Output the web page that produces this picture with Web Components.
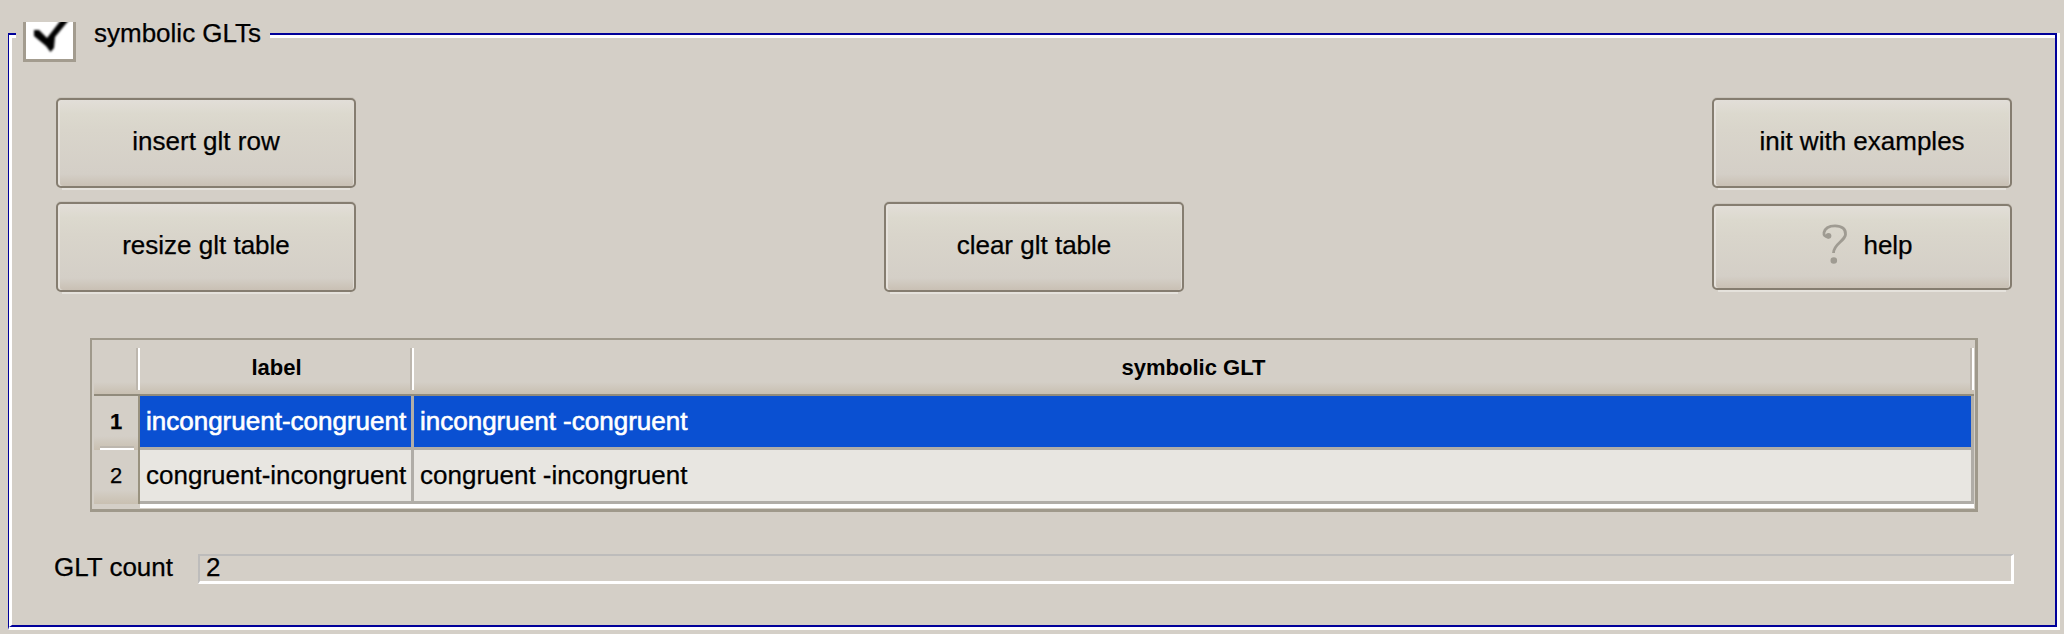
<!DOCTYPE html>
<html lang="en"><head><meta charset="utf-8"><title>symbolic GLTs</title>
<style>
html,body{margin:0;height:100%;background:#d4cfc7}
body{font:26px/30px "Liberation Sans",Arial,sans-serif;color:#000;overflow:hidden;-webkit-text-stroke:.25px}
</style></head><body>
<glt-group>
<span slot="title">symbolic GLTs</span>
<div style="display:grid;grid-template-columns:1fr 1fr 1fr;padding:0 43px 0 44px;row-gap:14px;align-items:center">
<glt-button>insert glt row</glt-button><span></span><glt-button style="justify-self:end">init with examples</glt-button>
<glt-button>resize glt table</glt-button><glt-button style="justify-self:center">clear glt table</glt-button><glt-button short style="justify-self:end"><glt-question slot="icon"></glt-question>help</glt-button>
</div>
<glt-table></glt-table>
<glt-count value="2">GLT count</glt-count>
</glt-group>
<script>
const define=(name,html)=>customElements.define(name,class extends HTMLElement{
constructor(){super();const t=document.createElement('template');t.innerHTML=html;
this.attachShadow({mode:'open'}).append(t.content.cloneNode(true));
const v=this.shadowRoot.querySelector('[data-value]');if(v)v.textContent=this.getAttribute('value');}});

define('glt-group',`<style>
:host{display:block;box-sizing:border-box;height:634px;padding:22px 4px 4px 8px}
.frame{display:grid;grid-template-rows:76px 1fr;height:608px}
.head{display:grid;grid-template-columns:4px 4px 7px 53px 18px 176px 1fr;height:76px}
.edge{margin-top:11px}
.l{box-sizing:border-box;border-left:1px solid #00009a;border-top:2px solid #00009a;box-shadow:inset 3px 3px #fff}
.s{border-top:2px solid #00009a;box-shadow:inset 0 3px #fff}
.r{border-top:2px solid #00009a;position:relative;box-shadow:inset 0 3px #fff;margin-right:3px}
.r:after{content:"";position:absolute;right:0;top:0;bottom:0;border-right:2px solid #00009a}
.r:before{content:"";position:absolute;right:-3px;top:-2px;bottom:0;border-right:3px solid #fff}
.title{white-space:nowrap;margin-top:-4px}
.body{border-left:1px solid #00009a;border-right:3px solid #fff;border-bottom:3px solid #fff}
.in{box-sizing:border-box;height:100%;border-left:3px solid #fff;border-right:2px solid #00009a;border-bottom:2px solid #00009a}
</style><div class="frame"><div class="head"><i class="edge l"></i><i class="edge s" style="height:3px"></i><i></i><glt-check></glt-check><i></i><div class="title"><slot name="title"></slot></div><i class="edge r"></i></div><div class="body"><div class="in"><slot></slot></div></div></div>`);

define('glt-check',`<style>:host{display:block;box-sizing:border-box;width:53px;height:40px;background:#fff;border:3px solid #a39c8f;border-top:0}svg{display:block}path{filter:blur(1px)}</style>
<svg width="47" height="37"><path d="M8 8 H13 L21 16 L35 -2 H43 L29 15 L28 26 L24.500 30 L20 24 L8 14Z" fill="#000"/></svg>`);

define('glt-question',`<style>:host{display:block;width:26px;height:40px;margin:-6px 16px 0 0}svg{display:block;filter:blur(.4px)}</style>
<svg width="28" height="40" fill="none" stroke="#9f9b92" stroke-width="2.8"><path d="M8 13C4 13 2.500 11 3 8.500C4 4 8 1.800 14 1.800C21 1.800 25 5 24.500 10.500C24 17 12.500 20 12.500 29"/><circle cx="7.500" cy="11.800" r="1.500" fill="#9f9b92"/><circle cx="12.800" cy="36.500" r="1.900" fill="#9f9b92"/></svg>`);

define('glt-button',`<style>
:host{display:flex;box-sizing:border-box;width:300px;height:90px;align-items:center;justify-content:center;border:2px solid #857d70;border-radius:5px;
background:linear-gradient(#e2ded8 0,#dcd9ce 14px,#d9d5cb 30px,#d4cfc7 calc(100% - 12px),#c9c0b4 100%);
box-shadow:inset 2px 0 #e6e2dc,inset -1px 0 #e0dcd5,0 -1px #c9c4bb;white-space:nowrap;position:relative}
:host([short]){height:86px;padding-left:10px}
.lip{position:absolute;left:4px;right:4px;bottom:-4px;height:2px;background:#e5e2dc}
.t{margin-top:-4px}
</style><slot name="icon"></slot><span class="t"><slot></slot></span><i class="lip"></i>`);

define('glt-table',`<style>
:host{display:grid;box-sizing:border-box;margin:46px 77px 0 78px;height:174px;border:solid #9f998b;border-width:2px 3px 3px 2px;padding:0 1px 1px 2px;
grid-template-columns:46px 274px 1fr;grid-template-rows:56px 54px 54px 4px}
div{box-sizing:border-box;white-space:nowrap}
.h{font-weight:bold;font-size:22px;text-align:center;line-height:55px;border-bottom:2px solid #918b7c;background:linear-gradient(transparent 42px,#c8bfb1 54px);
display:grid;grid-template-columns:1fr 4px;grid-template-rows:54px;-webkit-text-stroke:0}
.h span{padding-left:3px}
.h:after{content:"";margin-top:8px;height:42px;background:linear-gradient(90deg,#bdb7ae 2px,#fff 2px)}
.n{font-size:22px;text-align:center;line-height:51px;border-right:2px solid #99927f;background:linear-gradient(#d4cfc7 40px,#c9c0b1);display:grid;grid-template-rows:50px 4px}
.n.sep:after{content:"";margin:0 4px 0 6px;background:linear-gradient(#bdb7ae 2px,#fff 2px)}
.c{padding-left:6px;line-height:50px;border:solid #b0ada7;border-width:0 3px 3px 0;background:#e8e6e1}
.on{background:#0a50d2;color:#fff;-webkit-text-stroke:.6px #fff}
.w{background:#fff;grid-column:2/4}
</style>
<div class="h"><span></span></div><div class="h"><span>label</span></div><div class="h"><span>symbolic GLT</span></div>
<div class="n sep"><b>1</b></div><div class="c on">incongruent-congruent</div><div class="c on">incongruent -congruent</div>
<div class="n"><span>2</span></div><div class="c">congruent-incongruent</div><div class="c">congruent -incongruent</div>
<div class="w"></div>`);

define('glt-count',`<style>
:host{display:grid;grid-template-columns:144px 1fr;margin:42px 41px 0 42px;white-space:nowrap}
.f{box-sizing:border-box;height:30px;border:solid;border-width:2px 3px 3px 2px;border-color:#bdbcbb #fff #fff #bdbcbb;padding-left:6px;line-height:22px}
.k{line-height:26px}
</style><span class="k"><slot></slot></span><div class="f" data-value></div>`);
</script></body></html>
